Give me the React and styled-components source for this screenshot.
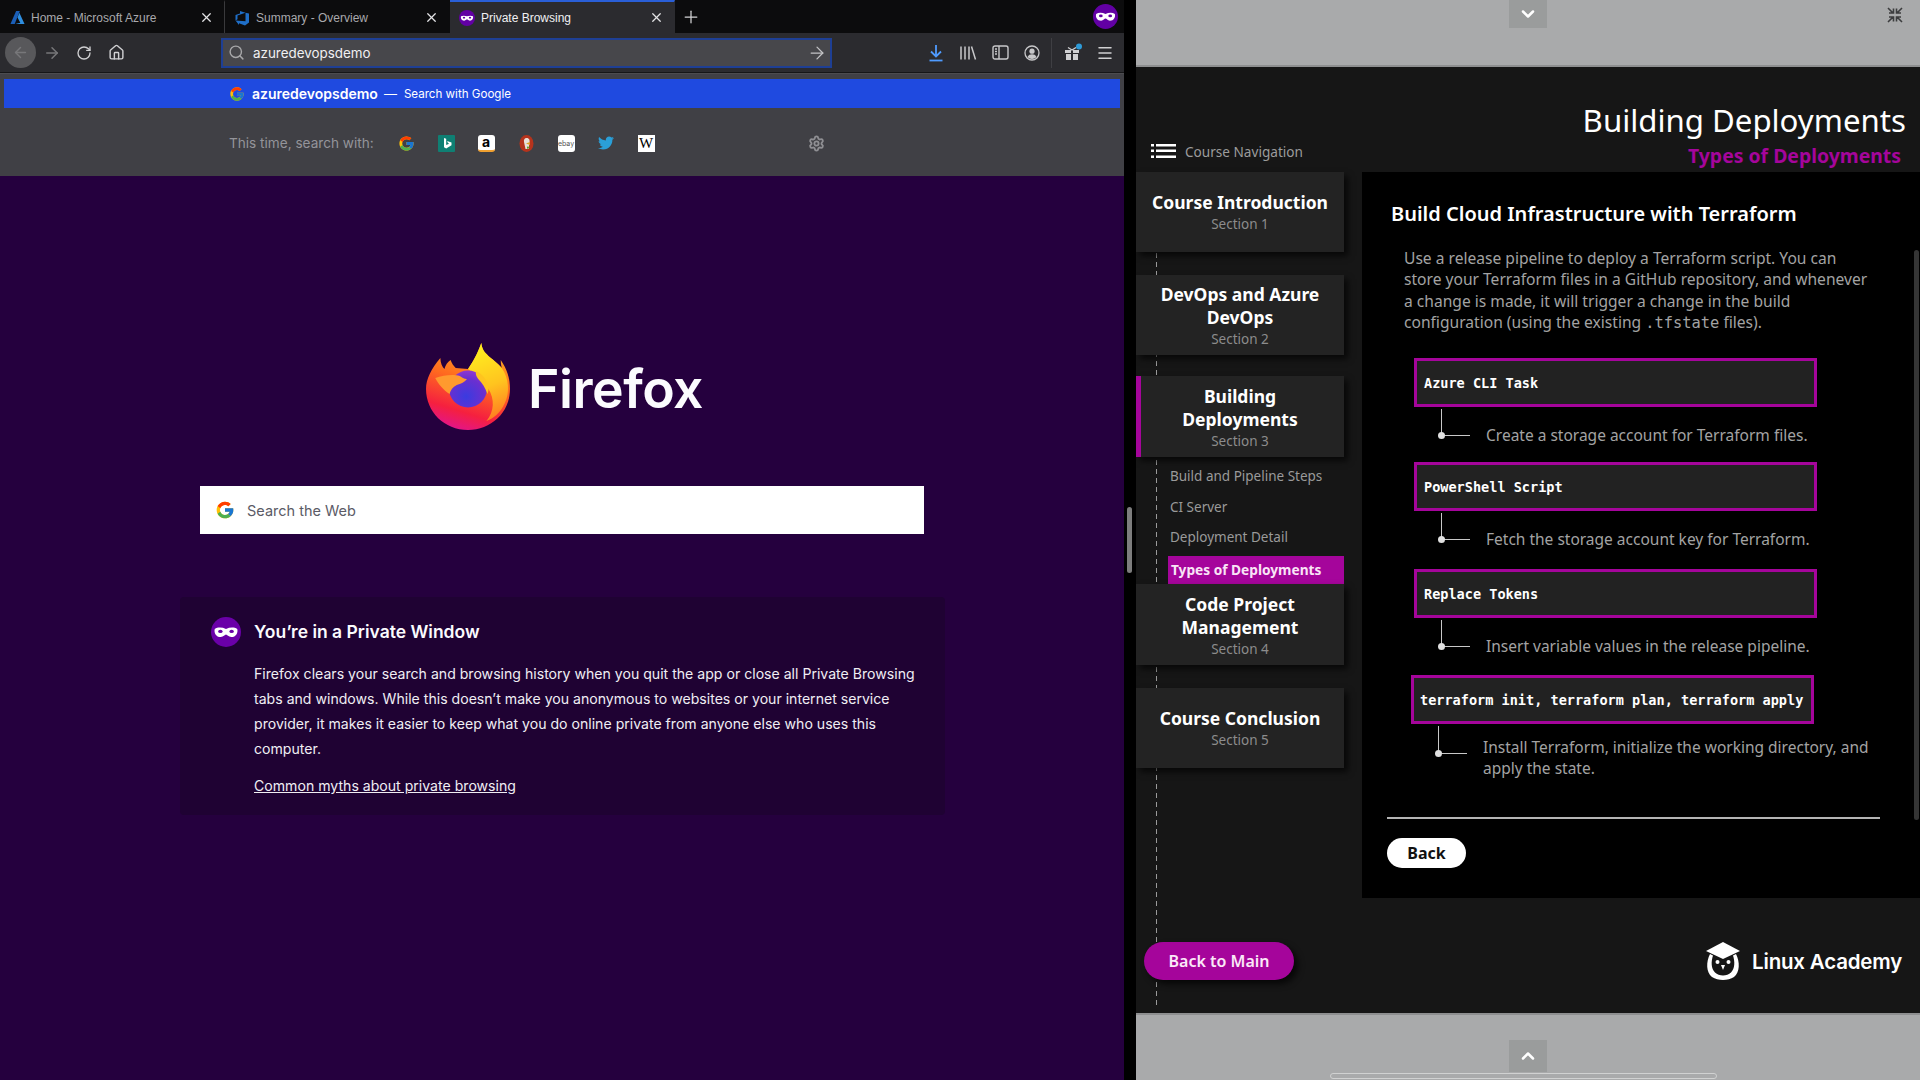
import styled, { createGlobalStyle } from 'styled-components';
import { ArrowLeft, ArrowRight, RotateCw, Home, Search, X, Plus, Menu, Settings, ChevronUp, ChevronDown } from 'lucide-react';
import { FcGoogle } from 'react-icons/fc';
import { FaTwitter } from 'react-icons/fa';

const GlobalStyle = createGlobalStyle`
  html, body { margin: 0; padding: 0; background: #000; }
  * { box-sizing: border-box; }
`;

const Screen = styled.div`
  width: 1920px;
  height: 1080px;
  display: flex;
  overflow: hidden;
  background: #000;
  font-family: Inter, "Liberation Sans", sans-serif;
`;

const Browser = styled.div`
  width: 1124px;
  height: 1080px;
  display: flex;
  flex-direction: column;
  background: #25003e;
`;

const Gutter = styled.div`
  width: 12px;
  padding: 507px 0 0 3px;
`;

const GutterThumb = styled.div`
  width: 5px;
  height: 66px;
  border-radius: 3px;
  background: #7d7d7d;
`;

const TabBar = styled.div`
  height: 33px;
  display: flex;
  align-items: stretch;
  background: #0c0c0d;
`;

const Tab = styled.div`
  width: 225px;
  display: flex;
  align-items: center;
  gap: 6px;
  padding: 0 10px 0 ${p => p.$pad || 10}px;
  font-family: "Liberation Sans", sans-serif;
  font-size: 12px;
  color: ${p => (p.$active ? '#f0f0f2' : '#a9a9ac')};
  background: ${p => (p.$active ? '#2b2b2f' : 'transparent')};
  border-top: 2px solid ${p => (p.$active ? '#2a5fd8' : 'transparent')};
  border-right: 1px solid ${p => (p.$divider ? '#3a3a3c' : 'transparent')};
  svg { flex-shrink: 0; }
`;

const TabClose = styled.span`
  margin-left: auto;
  display: flex;
  color: #e4e4e6;
`;

const NewTab = styled.div`
  width: 32px;
  display: flex;
  align-items: center;
  justify-content: center;
  color: #d4d4d6;
`;

const BadgeSlot = styled.div`
  margin-left: auto;
  width: 38px;
  display: flex;
  align-items: center;
  justify-content: center;
`;

const Toolbar = styled.div`
  height: 40px;
  display: flex;
  align-items: center;
  padding-left: 5px;
  background: #2b2b2f;
  border-bottom: 1px solid #161618;
`;

const BackCircle = styled.div`
  width: 31px;
  height: 31px;
  border-radius: 50%;
  background: #58585b;
  display: flex;
  align-items: center;
  justify-content: center;
  color: #77777a;
`;

const ToolIcon = styled.div`
  width: 32px;
  display: flex;
  align-items: center;
  justify-content: center;
  color: ${p => p.$color || '#d0d0d2'};
`;

const UrlBar = styled.div`
  width: 611px;
  height: 30px;
  margin: 0 88px 0 89px;
  display: flex;
  align-items: center;
  gap: 8px;
  padding: 0 3px 0 5px;
  background: #47474b;
  border: 2px solid #1e3f94;
  font-size: 13.4px;
  color: #f0f0f2;
`;

const UrlGo = styled.span`
  margin-left: auto;
  display: flex;
  color: #c4c4c6;
`;

const ToolSeparator = styled.div`
  width: 1px;
  height: 30px;
  margin: 0 5px 0 3px;
  background: #3f3f43;
`;

const Panel = styled.div`
  height: 103px;
  padding: 5px 4px 0;
  background: #404045;
  border-top: 1px solid #4c4c50;
`;

const HighlightRow = styled.div`
  height: 29px;
  display: flex;
  align-items: center;
  padding-left: 225px;
  background: #1f4ae0;
  color: #fff;
`;

const RowQuery = styled.span`
  margin-left: 7px;
  font-size: 14px;
  font-weight: 600;
`;

const RowDash = styled.span`
  margin-left: 6px;
  font-size: 13px;
`;

const RowAction = styled.span`
  margin-left: 7px;
  font-size: 11.6px;
`;

const EngineRow = styled.div`
  height: 62px;
  margin-top: 4px;
  display: flex;
  align-items: center;
  padding-left: 225px;
  font-size: 13.6px;
  color: #94949a;
`;

const EngineLabel = styled.span`
  width: 157px;
`;

const Engine = styled.div`
  width: 40px;
  display: flex;
  justify-content: center;
`;

const EngineTile = styled.div`
  width: 17px;
  height: 17px;
  display: flex;
  align-items: center;
  justify-content: center;
  border-radius: ${p => p.$radius || '2px'};
  background: ${p => p.$bg || '#fff'};
  color: ${p => p.$color || '#000'};
  border-bottom: ${p => (p.$under ? `2px solid ${p.$under}` : 'none')};
  font-family: ${p => p.$font || 'inherit'};
  font-size: ${p => p.$size || '13px'};
  font-weight: ${p => p.$weight || 400};
  line-height: 1;
`;

const EngineGear = styled.div`
  margin-left: 142px;
  display: flex;
  color: #8f8f93;
`;

const PrivatePage = styled.div`
  flex: 1;
  padding-top: 167px;
  color: #fff;
`;

const Brand = styled.div`
  display: flex;
  align-items: center;
  gap: 17px;
  height: 88px;
  margin-left: 425px;
`;

const BrandName = styled.span`
  padding-top: 3px;
  font-size: 53.5px;
  font-weight: 600;
  letter-spacing: -0.5px;
  color: #fbfbfe;
`;

const SearchBox = styled.div`
  width: 724px;
  height: 48px;
  margin: 55px 0 0 200px;
  display: flex;
  align-items: center;
  gap: 12px;
  padding-left: 15px;
  background: #fff;
  font-size: 14.5px;
  color: #5b5b66;
`;

const PrivateCard = styled.div`
  width: 765px;
  height: 218px;
  margin: 63px 0 0 180px;
  padding: 20px 21px 0 31px;
  display: grid;
  grid-template-columns: 43px 1fr;
  background: #1f0233;
  border-radius: 4px;
`;

const CardTitle = styled.h1`
  margin: 3px 0 17px;
  font-size: 17.5px;
  line-height: 24px;
  font-weight: 600;
  color: #fbfbfe;
`;

const CardText = styled.p`
  margin: 0 0 12px;
  font-size: 14.1px;
  line-height: 25px;
  color: #f0eef3;
`;

const CardLink = styled.a`
  font-size: 14.1px;
  line-height: 25px;
  color: #f0eef3;
  text-decoration: underline;
`;

const Course = styled.div`
  flex: 1;
  display: flex;
  flex-direction: column;
  font-family: "Noto Sans", "Open Sans", sans-serif;
`;

const GreyBand = styled.div`
  height: 67px;
  position: relative;
  display: flex;
  background: #a9aaab;
  border-bottom: ${p => (p.$top ? '2px solid #8e8f90' : 'none')};
  border-top: ${p => (p.$top ? 'none' : '2px solid #8e8f90')};
`;

const PullTab = styled.div`
  width: 38px;
  height: ${p => (p.$top ? '28px' : '32px')};
  margin: ${p => (p.$top ? '0 0 0 373px' : '25px 0 0 373px')};
  display: flex;
  align-items: center;
  justify-content: center;
  background: #9a9c9c;
  color: #fff;
`;

const Shrink = styled.div`
  margin: 7px 0 0 auto;
  padding-right: 17px;
  display: flex;
  height: 18px;
`;

const ScrollPill = styled.div`
  position: absolute;
  left: 194px;
  bottom: 1px;
  width: 387px;
  height: 6px;
  border: 1px solid #d0d1d1;
  border-radius: 3px;
`;

const CoursePanel = styled.div`
  height: 946px;
  background: #161616;
`;

const CourseHead = styled.div`
  height: 105px;
  display: flex;
  justify-content: space-between;
`;

const NavHeading = styled.div`
  display: flex;
  align-items: center;
  gap: 9px;
  height: 24px;
  margin: 72px 0 0 15px;
  font-size: 13.6px;
  color: #9c9c9c;
`;

const HeadTitles = styled.div`
  padding: 30px 14px 0 0;
  text-align: right;
`;

const PageTitle = styled.div`
  font-size: 31.2px;
  line-height: 46px;
  color: #fff;
`;

const PageSubtitle = styled.div`
  padding-right: 5px;
  font-size: 19.4px;
  line-height: 25px;
  font-weight: 700;
  color: #a5059b;
`;

const CourseBody = styled.div`
  display: grid;
  grid-template-columns: 226px 1fr;
`;

const NavColumn = styled.div`
  width: 208px;
  height: 833px;
  background: repeating-linear-gradient(to bottom, #9a9a9a 0 5px, transparent 5px 9px) 20px 0 / 1px 100% no-repeat;
`;

const NavCard = styled.div`
  width: 208px;
  height: ${p => p.$height || 80}px;
  margin-top: ${p => p.$top || 0}px;
  display: flex;
  flex-direction: column;
  justify-content: center;
  align-items: center;
  padding: ${p => p.$nudge || 0}px ${p => (p.$active ? 17 : 12)}px 0 12px;
  text-align: center;
  background: #232323;
  border-left: ${p => (p.$active ? '5px solid #a5059b' : 'none')};
  box-shadow: 4px 4px 6px rgba(0, 0, 0, 0.65);
`;

const NavTitle = styled.div`
  font-size: 17.5px;
  line-height: 23px;
  font-weight: 700;
  color: #fff;
`;

const NavSection = styled.div`
  font-size: 13.5px;
  line-height: 20px;
  color: #8c8c8c;
`;

const SubNav = styled.div`
  padding: 4px 0 0 32px;
`;

const SubItem = styled.div`
  height: 30.6px;
  display: flex;
  align-items: center;
  padding-left: 2px;
  font-size: 13.5px;
  color: #9a9a9a;
`;

const SubItemActive = styled.div`
  height: 28px;
  margin-top: 3px;
  display: flex;
  align-items: center;
  padding-left: 3px;
  font-size: 13.7px;
  font-weight: 700;
  background: #a5059b;
  color: #f9e4f6;
`;

const MainButton = styled.div`
  width: 150px;
  height: 38px;
  margin: 174px 0 0 8px;
  display: flex;
  align-items: center;
  justify-content: center;
  border-radius: 19px;
  background: #a5059b;
  color: #fbe8f8;
  font-size: 16px;
  font-weight: 600;
  box-shadow: 4px 4px 6px rgba(0, 0, 0, 0.7);
`;

const ContentBox = styled.div`
  position: relative;
  height: 726px;
  padding: 28px 0 0 29px;
  background: #000;
`;

const ContentScroll = styled.div`
  position: absolute;
  top: 78px;
  right: 1px;
  width: 5px;
  height: 570px;
  border-radius: 3px;
  background: #353535;
`;

const ContentTitle = styled.h2`
  margin: 0 0 21px;
  font-size: 20px;
  line-height: 27px;
  font-weight: 600;
  color: #fff;
`;

const Intro = styled.p`
  width: 468px;
  margin: 0 0 24px 13px;
  font-size: 15.6px;
  line-height: 21.3px;
  color: #a3a3a3;
`;

const Mono = styled.code`
  font-family: "DejaVu Sans Mono", "Liberation Mono", monospace;
  font-size: 15.4px;
  color: #a3a3a3;
`;

const StepBox = styled.div`
  width: 403px;
  height: 49px;
  margin-left: ${p => p.$left}px;
  display: flex;
  align-items: center;
  padding-left: ${p => p.$pad || 7}px;
  background: #222;
  border: 3px solid #a5059b;
  font-family: "DejaVu Sans Mono", "Liberation Mono", monospace;
  font-size: 13.55px;
  font-weight: 700;
  color: #fff;
`;

const StepNote = styled.div`
  display: flex;
  height: ${p => p.$height}px;
  margin-left: ${p => p.$left}px;
`;

const Connector = styled.div`
  position: relative;
  flex-shrink: 0;
  width: 29px;
  height: ${p => p.$height || 27}px;
  margin-top: 2px;
  border-left: 1px solid #c8c8c8;
  border-bottom: 1px solid #c8c8c8;
  &::after {
    content: '';
    position: absolute;
    left: -4px;
    bottom: -4px;
    width: 7px;
    height: 7px;
    border-radius: 50%;
    background: #e0e0e0;
  }
`;

const NoteText = styled.div`
  width: ${p => p.$width || 390}px;
  margin: ${p => p.$top || 18}px 0 0 16px;
  font-size: 15.5px;
  line-height: ${p => p.$leading || 21}px;
  color: #a3a3a3;
`;

const Rule = styled.div`
  width: 493px;
  height: 2px;
  margin: 0 0 19px -4px;
  background: #b4b4b4;
`;

const BackButton = styled.div`
  width: 79px;
  height: 30px;
  margin-left: -4px;
  display: flex;
  align-items: center;
  justify-content: center;
  border-radius: 15px;
  background: #fff;
  color: #111;
  font-size: 16px;
  font-weight: 700;
`;

const AcademyRow = styled.div`
  display: flex;
  align-items: center;
  justify-content: flex-end;
  gap: 11px;
  height: 38px;
  margin-top: 44px;
  padding-right: 18px;
`;

const AcademyName = styled.span`
  font-family: Inter, "Liberation Sans", sans-serif;
  font-size: 20.5px;
  font-weight: 600;
  letter-spacing: -0.2px;
  color: #fff;
`;

const MaskIcon = ({ size = 16, bg = '#6200a4' }) => (
  <svg width={size} height={size} viewBox="0 0 24 24">
    <circle cx="12" cy="12" r="12" fill={bg} />
    <path d="M3 9.5c2.5-1.5 6-1.2 9 0 3-1.2 6.500-1.500 9 0 .8 3-1 6.500-4.800 6.500-2.200 0-3.200-2-4.200-2s-2 2-4.200 2C4 16 2.200 12.500 3 9.500z" fill="#fff" />
    <ellipse cx="7.500" cy="11.500" rx="1.800" ry="1.300" fill={bg} />
    <ellipse cx="16.500" cy="11.500" rx="1.800" ry="1.300" fill={bg} />
  </svg>
);

const AzureIcon = () => (
  <svg width="15" height="15" viewBox="0 0 16 16">
    <path d="M6.500 1h4L5 15H.5z" fill="#1b5fb8" />
    <path d="M10 3l5.500 12H5.500l5.500-1.500L8 8z" fill="#2f8fe0" />
  </svg>
);

const DevOpsIcon = () => (
  <svg width="16" height="16" viewBox="0 0 16 16">
    <path d="M15 3.500v9l-4 3-6-2.200V15L1.500 10.500l10 .8V2.800zM11.500 2.800 6 1v2.500L1.500 5v5.500l2-1.200V5.500z" fill="#1f6fc8" />
  </svg>
);

const LibraryIcon = () => (
  <svg width="18" height="16" viewBox="0 0 18 16" stroke="#c8c8ca" strokeWidth="1.500" fill="none">
    <path d="M2 1.500v13M6 1.500v13M10 1.500v13M12.500 1.500l4 13" />
  </svg>
);

const SidebarIcon = () => (
  <svg width="17" height="15" viewBox="0 0 17 15" fill="none" stroke="#c8c8ca" strokeWidth="1.400">
    <rect x="1" y="1" width="15" height="13" rx="2" />
    <path d="M7 1v13M3 4h2M3 6.500h2M3 9h2" />
  </svg>
);

const AccountIcon = () => (
  <svg width="16" height="16" viewBox="0 0 16 16" fill="none">
    <circle cx="8" cy="8" r="7" stroke="#c8c8ca" strokeWidth="1.300" />
    <circle cx="8" cy="6.200" r="2.600" fill="#c8c8ca" />
    <path d="M3.500 12c1-2 2.500-2.700 4.500-2.700s3.500.7 4.500 2.700c-1 1.200-2.700 2-4.500 2s-3.500-.8-4.500-2z" fill="#c8c8ca" />
  </svg>
);

const DownloadIcon = () => (
  <svg width="16" height="18" viewBox="0 0 16 18" fill="none" stroke="#4f9bff" strokeWidth="1.800">
    <path d="M8 1v11M3 7.500l5 5 5-5" />
    <path d="M1.500 16.500h13" />
  </svg>
);

const GiftIcon = () => (
  <svg width="20" height="20" viewBox="0 0 20 20">
    <circle cx="16" cy="3.500" r="3" fill="#2e9bd8" />
    <path d="M2 7h6v3H2zM10 7h6v3h-6zM3 11h5v6H3zM10 11h5v6h-5z" fill="#d0d0d2" />
    <path d="M5 4.500 9 7l4-2.500" fill="none" stroke="#d0d0d2" strokeWidth="1.400" />
  </svg>
);

const BingIcon = () => (
  <svg width="17" height="17" viewBox="0 0 17 17">
    <rect width="17" height="17" rx="1" fill="#0f7f73" />
    <path d="M6 3l2.200.8v6.200l3-1.300-1.300-.7-.8-2 4.400 1.600v2.700L8.200 13.500 6 12.200z" fill="#fff" />
  </svg>
);

const DuckIcon = () => (
  <svg width="17" height="17" viewBox="0 0 17 17">
    <ellipse cx="8.500" cy="8.500" rx="7" ry="8.500" fill="#b5331c" />
    <path d="M8.500 3c3 0 3.500 2.500 3 5l-1 6h-3L6 7c-.4-2 .5-4 2.500-4z" fill="#e8e0d8" />
    <path d="M8 8.500l4-1.500v3z" fill="#e0a020" />
    <path d="M9 11.500l3 .5-3 2z" fill="#5aa02c" />
  </svg>
);

const NavListIcon = () => (
  <svg width="25" height="16" viewBox="0 0 25 16" fill="#fff">
    <path d="M0 1h3v2.500H0zM5 1h20v2.500H5zM0 6.500h3V9H0zM5 6.500h20V9H5zM0 12.500h3V15H0zM5 12.500h20V15H5z" />
  </svg>
);

const ShrinkIcon = () => (
  <svg width="16" height="16" viewBox="0 0 16 16" fill="none" stroke="#3c3d3e" strokeWidth="1.600">
    <path d="M1 1l5 5M2 6h4.500V1.500M15 1l-5 5M14 6H9.500V1.500M1 15l5-5M2 10h4.500v4.500M15 15l-5-5M14 10H9.500v4.500" />
  </svg>
);

const FirefoxLogo = () => (
  <svg width="86" height="88" viewBox="0 0 84 88" preserveAspectRatio="none">
    <defs>
      <linearGradient id="ffBody" x1="0.7" y1="0" x2="0.4" y2="1">
        <stop offset="0" stopColor="#ffb51f" />
        <stop offset="0.45" stopColor="#ff6a1f" />
        <stop offset="0.8" stopColor="#f5203f" />
        <stop offset="1" stopColor="#e31587" />
      </linearGradient>
      <linearGradient id="ffFlame" x1="0.4" y1="0" x2="0.6" y2="1">
        <stop offset="0" stopColor="#fff01f" />
        <stop offset="0.55" stopColor="#ffc41f" />
        <stop offset="1" stopColor="#ff7a22" />
      </linearGradient>
      <radialGradient id="ffCore" cx="0.45" cy="0.7" r="0.8">
        <stop offset="0" stopColor="#3a3be0" />
        <stop offset="0.6" stopColor="#6a2fd0" />
        <stop offset="1" stopColor="#a13bd0" />
      </radialGradient>
    </defs>
    <path d="M1 46C1 36 6 26 15 15c0 5 2 9 4 11 1-4 3-7 6-9 1 3 3 6 5 8l12 1C50 14 52 8 55 0c1 12 11 14 20 25 -1-4-1-6-1-8 6 9 9 18 9 29 0 24-19 41-41 41C19 87 1 69 1 46z" fill="url(#ffBody)" />
    <path d="M55 0c1 12 11 14 20 25 7 10 8 25 3 35-4 10-12 16-18 18 8-10 8-22 2-32-5-8-12-14-20-20C50 14 52 8 55 0z" fill="url(#ffFlame)" />
    <circle cx="42" cy="46" r="18.500" fill="url(#ffCore)" />
    <path d="M50 28c6 3 11 9 12 16 .5 3-.5 5-1 7-2-6-5-11-9-15-2-3-3-5-2-8z" fill="#ffc41f" />
    <path d="M10 35c8-3 18-4 24-2 2 1 4 3 7 3-2 3-6 5-10 6-4 2-6 5-7 9-6-4-11-10-14-16z" fill="#ff9a2e" />
  </svg>
);

const AcademyLogo = () => (
  <svg width="36" height="38" viewBox="0 0 36 38">
    <path d="M18 0l17 9-17 8L1 9z" fill="#fff" />
    <path d="M5 12c-4 8-4 18 2 23 3 2 7 3 11 3s8-1 11-3c6-5 6-15 2-23l-3 1.500c2 6 2 13-2 17-2 2-5 3-8 3s-6-1-8-3c-4-4-4-11-2-17z" fill="#fff" />
    <circle cx="12.500" cy="20" r="2" fill="#fff" />
    <circle cx="23.500" cy="20" r="2" fill="#fff" />
    <path d="M16 23h4l-2 5z" fill="#fff" />
  </svg>
);

const courseSteps = [
  { name: 'Azure CLI Task', note: 'Create a storage account for Terraform files.', height: 55 },
  { name: 'PowerShell Script', note: 'Fetch the storage account key for Terraform.', height: 58 },
  { name: 'Replace Tokens', note: 'Insert variable values in the release pipeline.', height: 57 },
];

export default function App() {
  return (
    <Screen>
      <GlobalStyle />
      <Browser>
        <TabBar>
          <Tab $divider>
            <AzureIcon />
            Home - Microsoft Azure
            <TabClose><X size={15} /></TabClose>
          </Tab>
          <Tab $pad={9}>
            <DevOpsIcon />
            Summary - Overview
            <TabClose><X size={15} /></TabClose>
          </Tab>
          <Tab $active $pad={9}>
            <MaskIcon size={16} />
            Private Browsing
            <TabClose><X size={15} /></TabClose>
          </Tab>
          <NewTab><Plus size={20} strokeWidth={1.5} /></NewTab>
          <BadgeSlot><MaskIcon size={25} /></BadgeSlot>
        </TabBar>
        <Toolbar>
          <BackCircle><ArrowLeft size={17} /></BackCircle>
          <ToolIcon $color="#77777a"><ArrowRight size={18} /></ToolIcon>
          <ToolIcon><RotateCw size={16} /></ToolIcon>
          <ToolIcon><Home size={17} /></ToolIcon>
          <UrlBar>
            <Search size={17} color="#a8a8aa" />
            azuredevopsdemo
            <UrlGo><ArrowRight size={20} strokeWidth={1.5} /></UrlGo>
          </UrlBar>
          <ToolIcon><DownloadIcon /></ToolIcon>
          <ToolIcon><LibraryIcon /></ToolIcon>
          <ToolIcon><SidebarIcon /></ToolIcon>
          <ToolIcon><AccountIcon /></ToolIcon>
          <ToolSeparator />
          <ToolIcon><GiftIcon /></ToolIcon>
          <ToolIcon><Menu size={18} /></ToolIcon>
        </Toolbar>
        <Panel>
          <HighlightRow>
            <FcGoogle size={16} />
            <RowQuery>azuredevopsdemo</RowQuery>
            <RowDash>—</RowDash>
            <RowAction>Search with Google</RowAction>
          </HighlightRow>
          <EngineRow>
            <EngineLabel>This time, search with:</EngineLabel>
            <Engine><FcGoogle size={17} /></Engine>
            <Engine><BingIcon /></Engine>
            <Engine><EngineTile $size="14px" $weight={700} $radius="3px" $under="#f0a030">a</EngineTile></Engine>
            <Engine><DuckIcon /></Engine>
            <Engine><EngineTile $size="7px" $color="#555" $radius="3px">ebay</EngineTile></Engine>
            <Engine><FaTwitter size={16} color="#2a9fd8" /></Engine>
            <Engine><EngineTile $font='"Liberation Serif", serif' $size="15px" $radius="0">W</EngineTile></Engine>
            <EngineGear><Settings size={17} strokeWidth={2.6} /></EngineGear>
          </EngineRow>
        </Panel>
        <PrivatePage>
          <Brand>
            <FirefoxLogo />
            <BrandName>Firefox</BrandName>
          </Brand>
          <SearchBox>
            <FcGoogle size={20} />
            Search the Web
          </SearchBox>
          <PrivateCard>
            <MaskIcon size={30} bg="#6a00a8" />
            <div>
              <CardTitle>You’re in a Private Window</CardTitle>
              <CardText>
                Firefox clears your search and browsing history when you quit the app or close all Private Browsing
                tabs and windows. While this doesn’t make you anonymous to websites or your internet service
                provider, it makes it easier to keep what you do online private from anyone else who uses this
                computer.
              </CardText>
              <CardLink>Common myths about private browsing</CardLink>
            </div>
          </PrivateCard>
        </PrivatePage>
      </Browser>
      <Gutter><GutterThumb /></Gutter>
      <Course>
        <GreyBand $top>
          <PullTab $top><ChevronDown size={20} strokeWidth={3} /></PullTab>
          <Shrink><ShrinkIcon /></Shrink>
        </GreyBand>
        <CoursePanel>
          <CourseHead>
            <NavHeading>
              <NavListIcon />
              Course Navigation
            </NavHeading>
            <HeadTitles>
              <PageTitle>Building Deployments</PageTitle>
              <PageSubtitle>Types of Deployments</PageSubtitle>
            </HeadTitles>
          </CourseHead>
          <CourseBody>
            <NavColumn>
              <NavCard>
                <NavTitle>Course Introduction</NavTitle>
                <NavSection>Section 1</NavSection>
              </NavCard>
              <NavCard $top={23} $nudge={2}>
                <NavTitle>DevOps and Azure DevOps</NavTitle>
                <NavSection>Section 2</NavSection>
              </NavCard>
              <NavCard $top={21} $height={81} $active $nudge={2}>
                <NavTitle>Building Deployments</NavTitle>
                <NavSection>Section 3</NavSection>
              </NavCard>
              <SubNav>
                <SubItem>Build and Pipeline Steps</SubItem>
                <SubItem>CI Server</SubItem>
                <SubItem>Deployment Detail</SubItem>
                <SubItemActive>Types of Deployments</SubItemActive>
              </SubNav>
              <NavCard $height={81} $nudge={4}>
                <NavTitle>Code Project Management</NavTitle>
                <NavSection>Section 4</NavSection>
              </NavCard>
              <NavCard $top={23} $nudge={2}>
                <NavTitle>Course Conclusion</NavTitle>
                <NavSection>Section 5</NavSection>
              </NavCard>
              <MainButton>Back to Main</MainButton>
            </NavColumn>
            <div>
              <ContentBox>
                <ContentScroll />
                <ContentTitle>Build Cloud Infrastructure with Terraform</ContentTitle>
                <Intro>
                  Use a release pipeline to deploy a Terraform script. You can store your Terraform files in a GitHub
                  repository, and whenever a change is made, it will trigger a change in the build configuration
                  (using the existing <Mono>.tfstate</Mono> files).
                </Intro>
                {courseSteps.map(step => (
                  <div key={step.name}>
                    <StepBox $left={23}>{step.name}</StepBox>
                    <StepNote $left={50} $height={step.height}>
                      <Connector />
                      <NoteText>{step.note}</NoteText>
                    </StepNote>
                  </div>
                ))}
                <StepBox $left={20} $pad={6}>terraform init, terraform plan, terraform apply</StepBox>
                <StepNote $left={47} $height={93}>
                  <Connector $height={28} />
                  <NoteText $top={12.500} $width={395} $leading={21.5}>
                    Install Terraform, initialize the working directory, and apply the state.
                  </NoteText>
                </StepNote>
                <Rule />
                <BackButton>Back</BackButton>
              </ContentBox>
              <AcademyRow>
                <AcademyLogo />
                <AcademyName>Linux Academy</AcademyName>
              </AcademyRow>
            </div>
          </CourseBody>
        </CoursePanel>
        <GreyBand>
          <PullTab><ChevronUp size={20} strokeWidth={3} /></PullTab>
          <ScrollPill />
        </GreyBand>
      </Course>
    </Screen>
  );
}
